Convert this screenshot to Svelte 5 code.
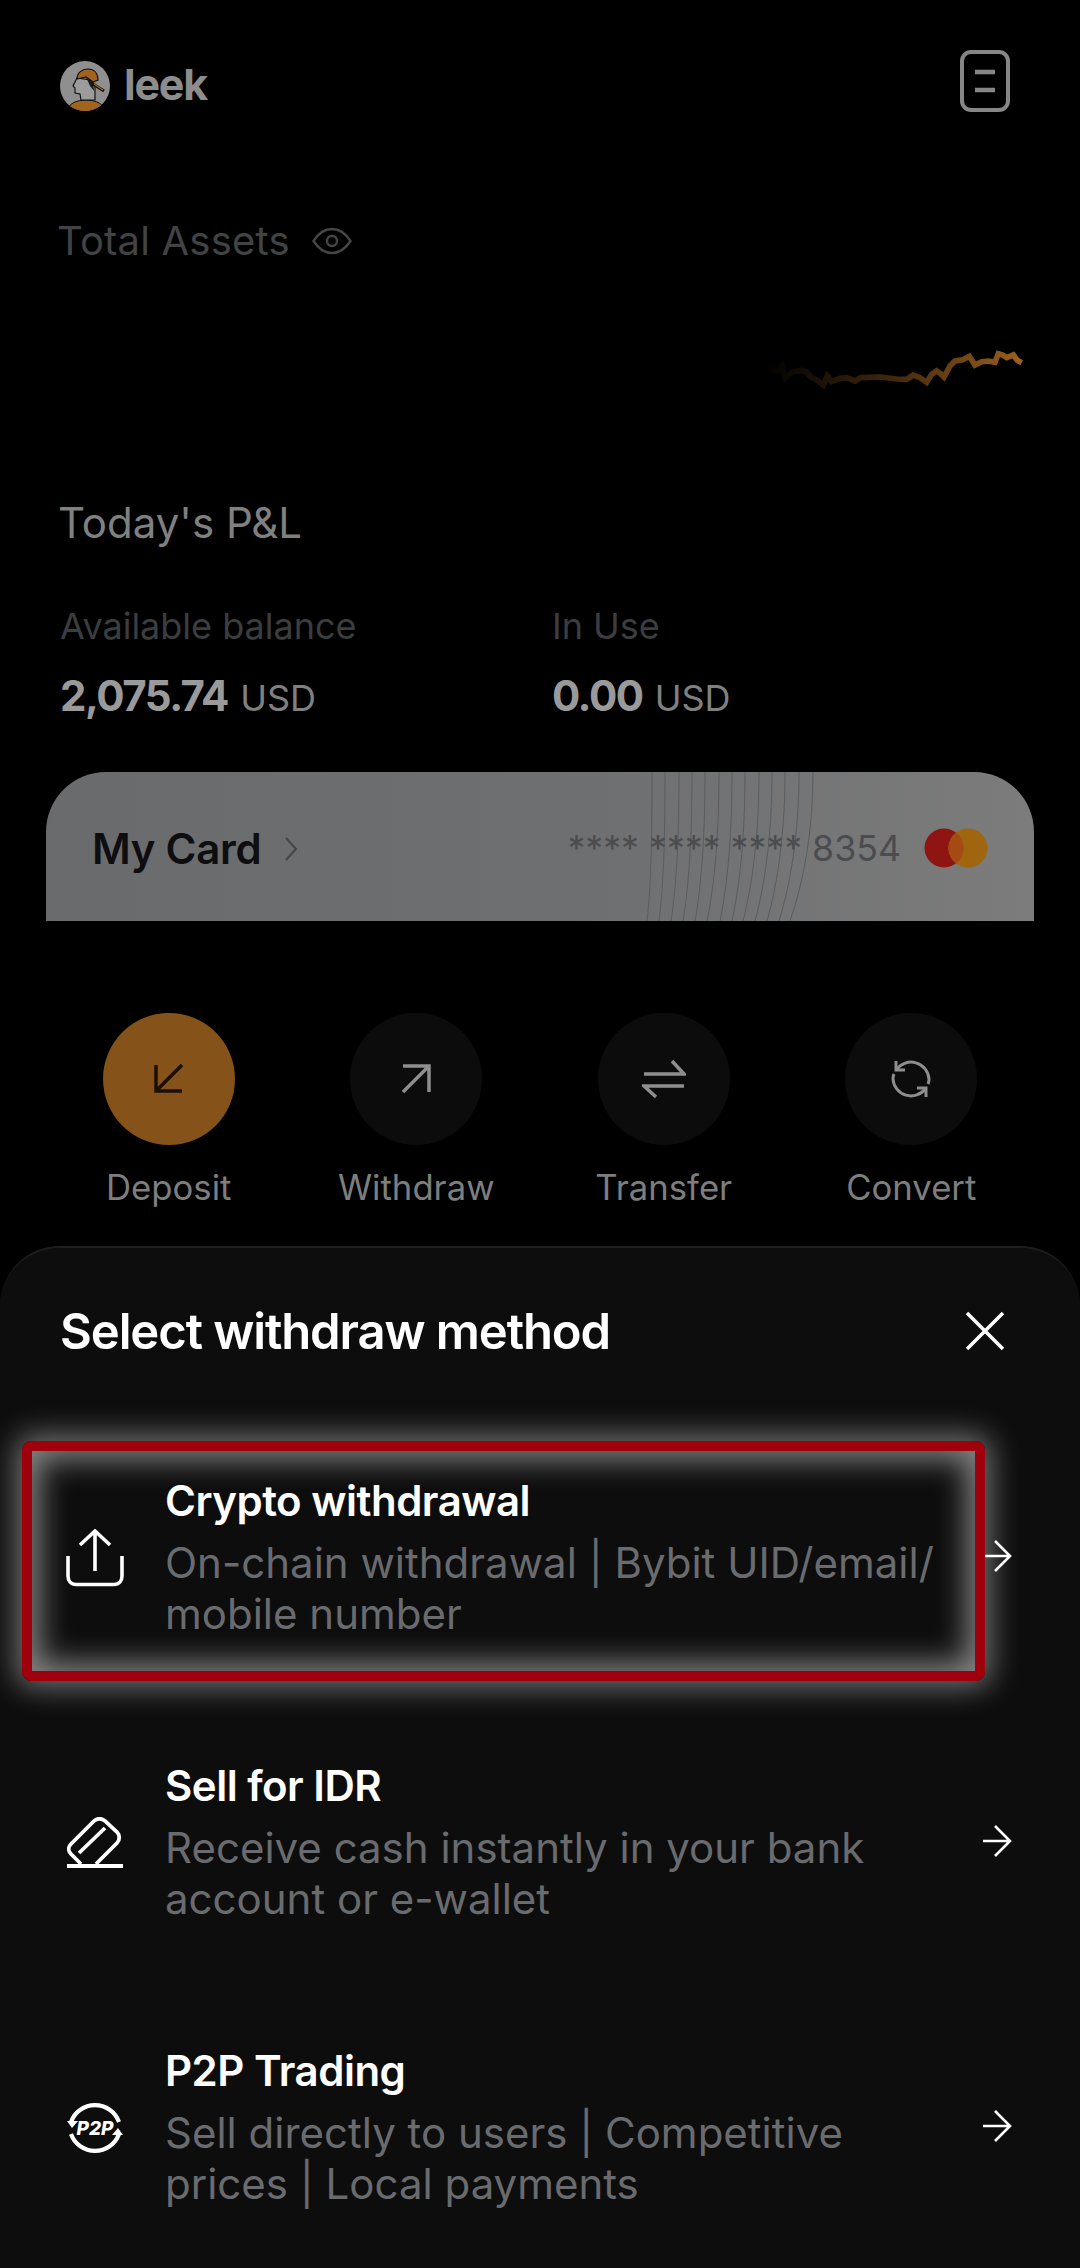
<script>
	const actions = [
		{ label: 'Deposit', icon: 'deposit', active: true },
		{ label: 'Withdraw', icon: 'withdraw' },
		{ label: 'Transfer', icon: 'transfer' },
		{ label: 'Convert', icon: 'convert' }
	];

	const methods = [
		{
			title: 'Crypto withdrawal',
			desc: 'On-chain withdrawal | Bybit UID/email/ mobile number',
			icon: 'upload',
			highlight: true
		},
		{
			title: 'Sell for IDR',
			desc: 'Receive cash instantly in your bank account or e-wallet',
			icon: 'sell'
		},
		{
			title: 'P2P Trading',
			desc: 'Sell directly to users | Competitive prices | Local payments',
			icon: 'p2p'
		}
	];

	// traced from the small asset curve
	const spark =
		'M80 140L100 148L112 150L125 135L135 172L148 160L160 152L185 148L200 154L212 168L232 178L250 192L262 165L275 182L300 172L320 170L345 180L362 170L420 168L470 174L500 175L520 162L540 170L560 184L575 160L590 150L602 158L612 168L630 135L645 120L668 116L688 106L705 132L725 122L745 120L765 124L775 98L788 102L800 110L820 102L832 118L845 125';

	// x at the top and bottom edge of the card, for the thin guilloche lines
	const cardLines = [
		[606, 601], [619, 613], [633, 625], [646, 637], [659, 649], [673, 661], [686, 674],
		[699, 686], [713, 697], [726, 709], [739, 721], [753, 733], [767, 744]
	];
</script>

<div class="page">
	<header class="top">
		<div class="brand">
			<svg class="logo" viewBox="0 0 50 50" width="50" height="50">
				<defs>
					<clipPath id="logo-clip"><circle cx="25" cy="25" r="25" /></clipPath>
				</defs>
				<circle cx="25" cy="25" r="25" fill="#8f8f8f" />
				<g clip-path="url(#logo-clip)">
					<ellipse cx="26" cy="47" rx="17" ry="8" fill="#a0641f" stroke="#111" stroke-width="1" />
					<path d="M17 17L13 25L15 27L15 32L20 33L21 39L35 39L35 24L30 19Z" fill="#9c9c9c" stroke="#111" stroke-width="1.2" />
					<path d="M17 18C17 11 23 8 28 8C34 8 38 12 38 19L33 21L26 16Z" fill="#a0641f" stroke="#111" stroke-width="1.2" />
					<path d="M26 16L33 21L34 30L30 25Z" fill="#1a1a1a" />
					<path d="M33 23L44 30" stroke="#111" stroke-width="3" />
					<path d="M34 23L43 29" stroke="#a0641f" stroke-width="1.4" />
				</g>
			</svg>
			<span class="wordmark">leek</span>
		</div>
		<svg class="menu" viewBox="0 0 50 62" width="50" height="62" fill="none" stroke="#868686" stroke-width="4">
			<rect x="2" y="2" width="46" height="58" rx="9" />
			<path d="M15 22H35M15 40H35" stroke-width="4.5" />
		</svg>
	</header>

	<div class="assets">
		<span>Total Assets</span>
		<svg viewBox="0 0 40 28" width="40" height="28" fill="none" stroke="#454545" stroke-width="2.4">
			<path d="M1.5 14C7 5.500 13 2 20 2C27 2 33 5.500 38.500 14C33 22.500 27 26 20 26C13 26 7 22.500 1.500 14Z" />
			<circle cx="20" cy="14" r="5" />
		</svg>
	</div>

	<div class="spark">
		<svg viewBox="0 0 900 240" width="300" height="80" fill="none">
			<defs>
				<linearGradient id="spark-fade" gradientUnits="userSpaceOnUse" x1="70" y1="0" x2="850" y2="0">
					<stop offset="0" stop-color="#9c601e" stop-opacity="0" />
					<stop offset="0.5" stop-color="#9c601e" stop-opacity="0.42" />
					<stop offset="1" stop-color="#9c601e" />
				</linearGradient>
			</defs>
			<path d={spark} stroke="url(#spark-fade)" stroke-width="17" />
		</svg>
	</div>

	<div class="pnl">Today's P&amp;L</div>

	<div class="balances">
		<div>
			<div class="bal-label">Available balance</div>
			<div class="bal-value"><b>2,075.74</b> USD</div>
		</div>
		<div>
			<div class="bal-label">In Use</div>
			<div class="bal-value"><b>0.00</b> USD</div>
		</div>
	</div>

	<div class="card">
		<svg class="card-lines" viewBox="0 0 988 149" width="988" height="149" fill="none" stroke="#5b5c5e" stroke-width="1">
			{#each cardLines as [t, b]}
				<path d="M{t} 0C{t} 60 {(t + b) / 2 + 2} 110 {b} 149" />
			{/each}
		</svg>
		<div class="card-name">
			<span>My Card</span>
			<svg viewBox="0 0 14 26" width="14" height="26" fill="none" stroke="#46474a" stroke-width="2.2">
				<path d="M2 2L12 13L2 24" />
			</svg>
		</div>
		<div class="card-right">
			<span class="card-num">**** **** **** 8354</span>
			<svg viewBox="0 0 64 40" width="64" height="40">
				<circle cx="20" cy="20" r="19.500" fill="#8f1512" />
				<circle cx="44" cy="20" r="19.500" fill="#a0650f" />
				<path d="M32 4.500A19.500 19.500 0 0 1 32 35.500A19.500 19.500 0 0 1 32 4.500Z" fill="#a44b14" />
			</svg>
		</div>
	</div>

	<nav class="actions">
		{#each actions as a}
			<div class="action">
				<div class="circle" class:active={a.active}>
					{#if a.icon === 'deposit'}
						<svg viewBox="0 0 40 40" width="40" height="40" fill="none" stroke="#1c0f05" stroke-width="3.500">
							<path d="M33 6L7 32M7 6V32H33" />
						</svg>
					{:else if a.icon === 'withdraw'}
						<svg viewBox="0 0 40 40" width="40" height="40" fill="none" stroke="#8e8e8e" stroke-width="3.500">
							<path d="M7 33L33 7M7 7H33V33" />
						</svg>
					{:else if a.icon === 'transfer'}
						<svg viewBox="0 0 44 40" width="44" height="40" fill="none" stroke="#8e8e8e" stroke-width="3.500">
							<path d="M2 15H42L30 2M42 27H2L14 38" />
						</svg>
					{:else}
						<svg viewBox="0 0 44 44" width="44" height="44" fill="none" stroke="#8e8e8e" stroke-width="3">
							<path d="M7 4V13H16M37 40V31H28" />
							<path d="M7.500 12.500A18 18 0 0 1 40 22C40 24 39.500 26 39 27M36.500 31.500A18 18 0 0 1 4 22C4 20 4.500 18 5 17" />
						</svg>
					{/if}
				</div>
				<span class="action-label">{a.label}</span>
			</div>
		{/each}
	</nav>

	<section class="sheet">
		<div class="sheet-head">
			<h2>Select withdraw method</h2>
			<svg viewBox="0 0 40 40" width="40" height="40" fill="none" stroke="#fff" stroke-width="3.500">
				<path d="M2 2L38 38M38 2L2 38" />
			</svg>
		</div>

		<ul class="methods">
			{#each methods as m}
				<li class="method">
					{#if m.highlight}
						<div class="highlight"></div>
					{/if}
					<div class="method-icon">
						{#if m.icon === 'upload'}
							<svg viewBox="0 0 58 58" width="58" height="58" fill="none" stroke="#fff" stroke-width="3.600">
								<path d="M29 42V2M14 16L29 2L44 16" />
								<path d="M2 27V47C2 52 5 55.500 10 55.500H48C53 55.500 56 52 56 47V27" />
							</svg>
						{:else if m.icon === 'sell'}
							<svg viewBox="0 0 56 52" width="56" height="52" fill="none" stroke="#fff" stroke-width="3.800">
								<path d="M14 47L4 37C1 34 1 30 4 27L27 4C30 1 35 1 38 4L50 15C53 18 53 23 50 26L29 47" />
								<path d="M12 36L38 11" />
								<path d="M0 49H56" stroke-width="4.200" />
							</svg>
						{:else}
							<svg viewBox="0 0 56 56" width="56" height="56" fill="none" stroke="#fff" stroke-width="4.200">
								<path d="M4 22A25.500 25.500 0 0 1 52 22" />
								<path d="M52 34A25.500 25.500 0 0 1 4 34" />
								<path d="M0 21H11L5 28ZM56 35H45L51 28Z" fill="#fff" stroke="none" />
								<text x="28" y="35" text-anchor="middle" class="p2p-text">P2P</text>
							</svg>
						{/if}
					</div>
					<div class="method-text">
						<div class="method-title">{m.title}</div>
						<div class="method-desc">{m.desc}</div>
					</div>
					<svg class="arrow" viewBox="0 0 30 32" width="30" height="32" fill="none" stroke="#fff" stroke-width="2.600">
						<path d="M1 16H28M13 1L28 16L13 31" />
					</svg>
				</li>
			{/each}
		</ul>
	</section>
</div>

<style>
	:global(body) {
		background: #000;
	}
	.page {
		height: 2268px;
		overflow: hidden;
		display: flex;
		flex-direction: column;
		background: #000;
		font-family: Inter, 'Liberation Sans', sans-serif;
	}
	.top {
		display: flex;
		justify-content: space-between;
		align-items: center;
		padding: 50px 70px 0 60px;
	}
	.brand {
		display: flex;
		align-items: center;
		gap: 14px;
		margin-top: 9px;
	}
	.wordmark {
		font-size: 43px;
		line-height: 50px;
		font-weight: 700;
		letter-spacing: -1.2px;
		color: #8d8d8d;
		margin-top: -4px;
	}
	.assets {
		display: flex;
		align-items: center;
		gap: 22px;
		margin: 106px 0 0 57px;
		font-size: 40px;
		letter-spacing: 0.2px;
		line-height: 46px;
		color: #424345;
	}
	.spark {
		display: flex;
		justify-content: flex-end;
		padding-right: 40px;
		margin-top: 57px;
	}
	.pnl {
		margin: 99px 0 0 58px;
		font-size: 42px;
		line-height: 46px;
		color: #808080;
	}
	.balances {
		display: grid;
		grid-template-columns: 492px 1fr;
		margin: 60px 0 0 60px;
	}
	.bal-label {
		font-size: 36px;
		line-height: 40px;
		color: #3c3d3f;
	}
	.bal-value {
		height: 50px;
		margin-top: 25px;
		font-size: 36px;
		line-height: 50px;
		color: #808080;
	}
	.bal-value b {
		font-size: 42px;
		font-weight: 700;
		letter-spacing: -1.5px;
		margin-right: 2px;
		color: #9a9a9a;
	}
	.card {
		position: relative;
		margin: 51px 46px 0;
		height: 149px;
		flex: none;
		overflow: hidden;
		border-radius: 60px 60px 0 0;
		background: linear-gradient(90deg, #6a6b6d, #6e6f71 55%, #7c7c7c);
		display: flex;
		justify-content: space-between;
		align-items: center;
		padding: 0 46px;
		box-sizing: border-box;
	}
	.card-lines {
		position: absolute;
		left: 0;
		top: 0;
	}
	.card-name {
		position: relative;
		display: flex;
		align-items: center;
		gap: 23px;
		font-size: 42px;
		font-weight: 600;
		letter-spacing: -0.3px;
		color: #0e0e10;
		margin-top: 4px;
	}
	.card-right {
		position: relative;
		display: flex;
		align-items: center;
		gap: 23px;
		margin-top: 2px;
	}
	.card-num {
		font-size: 35.700px;
		color: #4b4c4f;
	}
	.actions {
		display: grid;
		grid-template-columns: repeat(4, 247.500px);
		margin: 92px 0 0 45px;
	}
	.action {
		display: flex;
		flex-direction: column;
		align-items: center;
		gap: 22px;
	}
	.circle {
		width: 132px;
		height: 132px;
		border-radius: 50%;
		background: #0c0c0c;
		display: flex;
		align-items: center;
		justify-content: center;
	}
	.circle.active {
		background: #85521a;
	}
	.action-label {
		font-size: 34.700px;
		line-height: 40px;
		color: #7e7e7e;
	}
	.sheet {
		flex: 1;
		margin-top: 39px;
		border-top: 2px solid #1d1e20;
		border-radius: 60px 60px 0 0;
		background: #0d0d0d;
		padding: 54px 60px 0;
		box-sizing: border-box;
	}
	.sheet-head {
		display: flex;
		justify-content: space-between;
		align-items: center;
		padding-right: 15px;
	}
	.sheet-head svg {
		margin-top: -2px;
	}
	h2 {
		margin: 0;
		font-size: 49px;
		line-height: 60px;
		font-weight: 600;
		letter-spacing: -1.1px;
		color: #fff;
	}
	.methods {
		list-style: none;
		margin: 114px 0 0;
		padding: 0;
		display: flex;
		flex-direction: column;
		gap: 122px;
	}
	.method {
		position: relative;
		display: flex;
		align-items: center;
	}
	.highlight {
		position: absolute;
		left: -38px;
		top: -35px;
		width: 963px;
		height: 240px;
		box-sizing: border-box;
		border: 10px solid #a0000c;
		border-radius: 9px;
		box-shadow:
			0 0 30px 6px rgba(255, 255, 255, 0.42),
			inset 0 0 30px 8px rgba(255, 255, 255, 0.5);
		pointer-events: none;
	}
	.method-icon {
		width: 58px;
		margin-left: 6px;
		flex: none;
		display: flex;
		justify-content: center;
	}
	.method-icon svg {
		display: block;
	}
	.method-text {
		position: relative;
		flex: 1;
		margin-left: 41px;
		padding-right: 40px;
	}
	.method-title {
		font-size: 42px;
		line-height: 50px;
		font-weight: 600;
		letter-spacing: -0.5px;
		color: #fff;
	}
	.method-desc {
		margin-top: 11px;
		font-size: 42px;
		line-height: 51px;
		color: #696b6e;
	}
	.arrow {
		flex: none;
		margin: -4px 8px 0 0;
	}
	.p2p-text {
		font-family: Inter, 'Liberation Sans', sans-serif;
		font-size: 19px;
		font-weight: 800;
		font-style: italic;
		fill: #fff;
		stroke: none;
	}
</style>
